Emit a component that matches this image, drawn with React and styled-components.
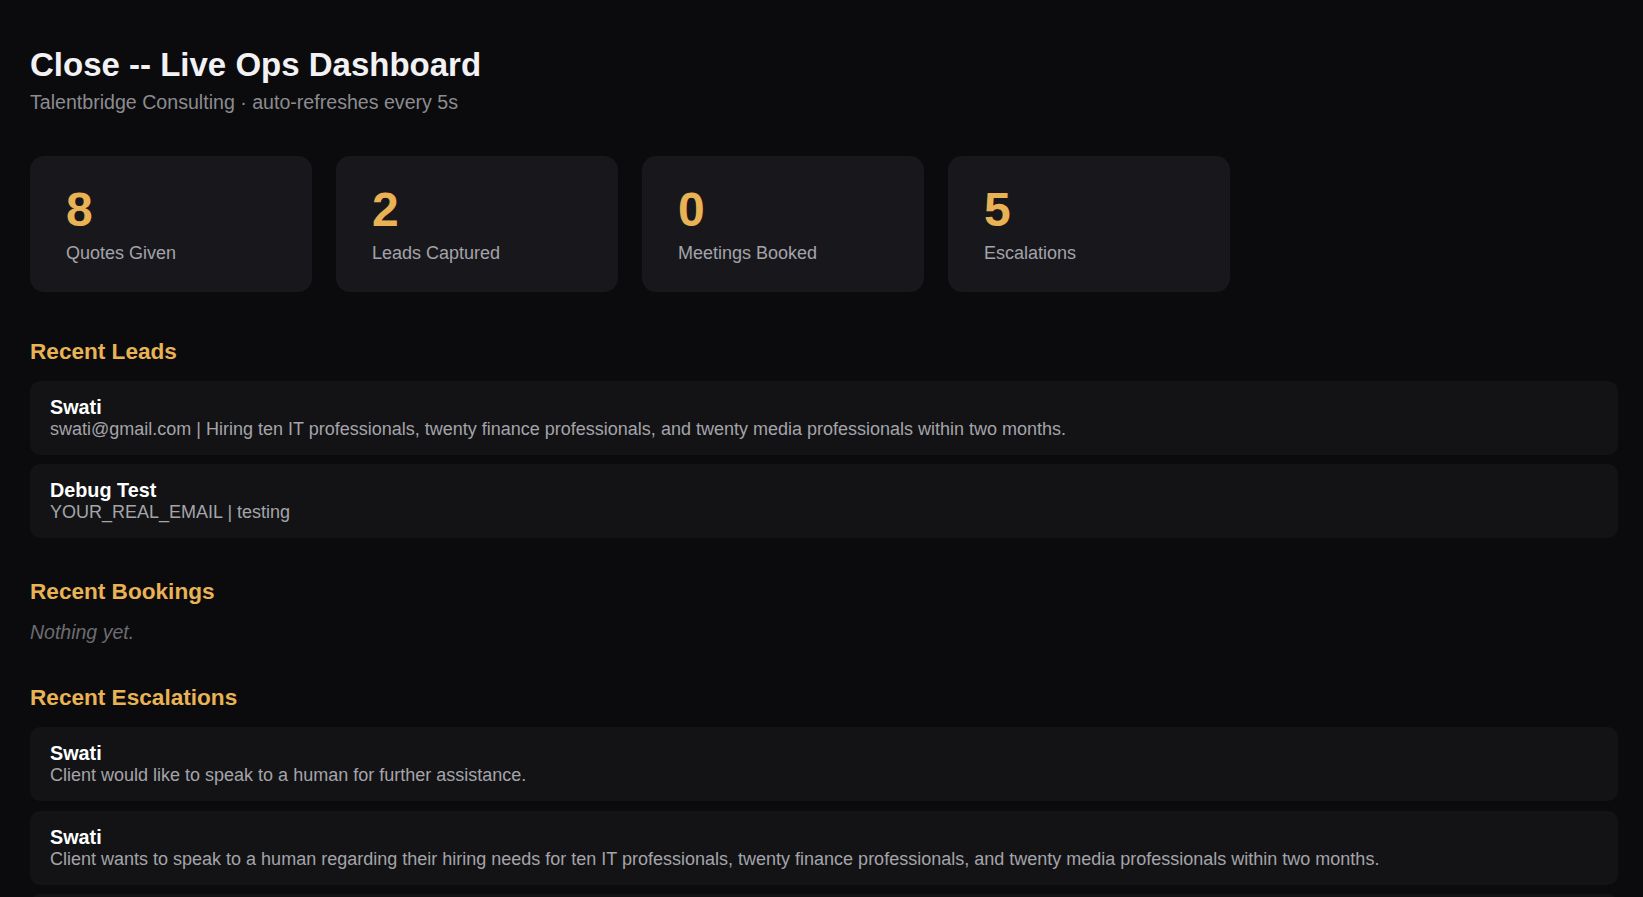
import React from 'react';
import styled, { createGlobalStyle } from 'styled-components';

const GlobalStyle = createGlobalStyle`
  * {
    box-sizing: border-box;
  }

  body {
    margin: 0;
    background: #0b0b0d;
    color: #f0f0f2;
    font-family: 'Liberation Sans', Arial, sans-serif;
  }
`;

const Page = styled.div`
  padding: 46px 25px 40px 30px;
`;

const Title = styled.h1`
  margin: 0;
  font-size: 33px;
  font-weight: 700;
  color: #f2f2f4;
`;

const Subtitle = styled.p`
  margin: 7px 0 0;
  font-size: 19.6px;
  color: #8b8b90;
`;

const Stats = styled.div`
  display: flex;
  gap: 24px;
  margin: 42px 0 47px;
`;

const StatCard = styled.div`
  width: 282px;
  padding: 28px 36px;
  background: #18181c;
  border-radius: 14px;
`;

const StatValue = styled.div`
  font-size: 48px;
  line-height: 1.1;
  font-weight: 700;
  color: #e9b255;
`;

const StatLabel = styled.div`
  margin-top: 6px;
  font-size: 18px;
  color: #a3a3aa;
`;

const Section = styled.section`
  margin-bottom: 41px;
`;

const SectionTitle = styled.h2`
  margin: 0 0 16px;
  font-size: 22.6px;
  font-weight: 700;
  color: #e9b255;
`;

const List = styled.div`
  display: flex;
  flex-direction: column;
  gap: 9.5px;
`;

const Item = styled.div`
  padding: 15px 20px;
  background: #131315;
  border-radius: 10px;
`;

const ItemName = styled.div`
  font-size: 19.8px;
  font-weight: 700;
  color: #ffffff;
`;

const ItemText = styled.div`
  font-size: 18px;
  color: #a4a4aa;
`;

const Empty = styled.p`
  margin: 0;
  font-size: 19.5px;
  font-style: italic;
  color: #6c6c72;
`;

const stats = [
  { value: 8, label: 'Quotes Given' },
  { value: 2, label: 'Leads Captured' },
  { value: 0, label: 'Meetings Booked' },
  { value: 5, label: 'Escalations' },
];

const leads = [
  {
    name: 'Swati',
    text: 'swati@gmail.com | Hiring ten IT professionals, twenty finance professionals, and twenty media professionals within two months.',
  },
  { name: 'Debug Test', text: 'YOUR_REAL_EMAIL | testing' },
];

const bookings = [];

const escalations = [
  { name: 'Swati', text: 'Client would like to speak to a human for further assistance.' },
  {
    name: 'Swati',
    text: 'Client wants to speak to a human regarding their hiring needs for ten IT professionals, twenty finance professionals, and twenty media professionals within two months.',
  },
  { name: 'Debug Test', text: 'testing' },
];

function RecentList({ title, items }) {
  return (
    <Section>
      <SectionTitle>{title}</SectionTitle>
      {items.length === 0 ? (
        <Empty>Nothing yet.</Empty>
      ) : (
        <List>
          {items.map((item, i) => (
            <Item key={i}>
              <ItemName>{item.name}</ItemName>
              <ItemText>{item.text}</ItemText>
            </Item>
          ))}
        </List>
      )}
    </Section>
  );
}

export default function App() {
  return (
    <>
      <GlobalStyle />
      <Page>
        <Title>Close -- Live Ops Dashboard</Title>
        <Subtitle>Talentbridge Consulting · auto-refreshes every 5s</Subtitle>

        <Stats>
          {stats.map((s) => (
            <StatCard key={s.label}>
              <StatValue>{s.value}</StatValue>
              <StatLabel>{s.label}</StatLabel>
            </StatCard>
          ))}
        </Stats>

        <RecentList title="Recent Leads" items={leads} />
        <RecentList title="Recent Bookings" items={bookings} />
        <RecentList title="Recent Escalations" items={escalations} />
      </Page>
    </>
  );
}
